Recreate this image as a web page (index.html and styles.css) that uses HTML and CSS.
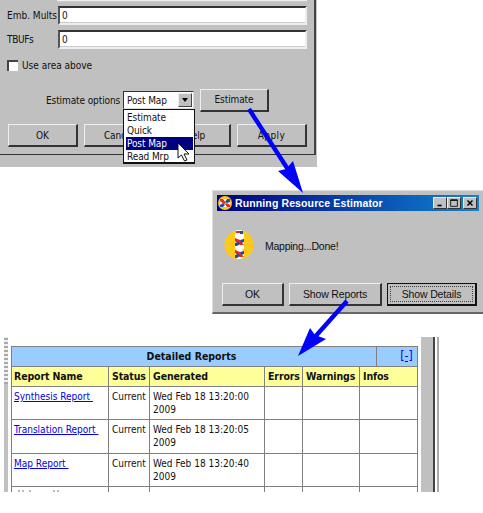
FILE: index.html
```
<!DOCTYPE html>
<html lang="en">
<head>
<meta charset="utf-8">
<title>Resource Estimator</title>
<link rel="stylesheet" href="styles.css">
</head>
<body>
<main class="canvas">
  <section class="panel">
    <div class="panel-body">
      <div class="previous-field"></div>
      <label class="field"><span class="w-mults">Emb. Mults</span><span class="input">0</span></label>
      <label class="field"><span class="w-tbufs">TBUFs</span><span class="input">0</span></label>
      <div class="check"><i class="box"></i><span>Use area above</span></div>
      <div class="options">
        <span class="options-label">Estimate options</span>
        <div class="select">
          <span>Post Map</span><i class="drop"></i>
          <ul class="menu">
            <li>Estimate</li><li>Quick</li><li class="selected">Post Map</li><li>Read Mrp</li>
          </ul>
        </div>
        <div class="button">Estimate</div>
      </div>
      <div class="actions">
        <div class="button">OK</div><div class="button">Cancel</div><div class="button">Help</div><div class="button apply">Apply</div>
      </div>
    </div>
  </section>

  <section class="dialog">
    <header class="titlebar">
      <svg class="app-icon" viewBox="0 0 14 14"><circle cx="7" cy="7" r="7" fill="#ffc91a"/><path d="M2 3h10v8H2z" fill="#fff"/><path d="M2 3h3l3 4-2 1-4-3zM12 11H9L7 8l2-1 3 2z" fill="#e42b20"/><path d="M12 3v3L9 7 7 6l2-3zM2 11V9l3-2 2 2-2 2z" fill="#29489b"/></svg>
      <h1>Running Resource Estimator</h1>
      <div class="window-buttons">
        <i class="win"><svg viewBox="0 0 14 12"><path d="M4 9h5" stroke="#000" stroke-width="2"/></svg></i>
        <i class="win"><svg viewBox="0 0 14 12"><path d="M3 2h8v8H3zM3 3h8" fill="none" stroke="#000"/></svg></i>
        <i class="win close"><svg viewBox="0 0 14 12"><path d="M4 3l6 6M10 3L4 9" stroke="#000" stroke-width="1.7"/></svg></i>
      </div>
    </header>
    <div class="message">
      <svg class="logo" viewBox="0 0 30 30">
        <circle cx="15" cy="16" r="14.500" fill="#ffc91a"/>
        <path d="M12 1h6v3l2 1v4l-2 2 2 3v5l-2 2 2 2v5l-3 2h-4l-2-2v-5l2-2-2-2v-5l2-3-2-2V5l1-1z" fill="#fff"/>
        <path d="M12 2h4v2h-4zM11 9l5 2 4 5h-4l-5-4zM11 21l5 2 4 5h-4l-5-4z" fill="#e42b20"/>
        <path d="M16 2h3v3h-3zM20 10v3l-3 1-1-3zM11 17v-3l3-1 2 2-3 2zM20 22v3l-3 1-1-3zM11 29v-3l3-1 2 2-3 2z" fill="#29489b"/>
      </svg>
      <p>Mapping...Done!</p>
    </div>
    <footer class="dialog-actions"><div class="button">OK</div><div class="button">Show Reports</div><div class="button focused"><span>Show Details</span></div></footer>
  </section>

  <section class="report">
    <div class="left-rail"></div>
    <div class="tables">
      <div class="report-title"><strong>Detailed Reports</strong><a>[-]</a></div>
      <div class="row head"><b>Report Name</b><b>Status</b><b>Generated</b><b>Errors</b><b>Warnings</b><b>Infos</b></div>
      <div class="row"><span><a>Synthesis Report&nbsp;</a></span><span>Current</span><span>Wed Feb 18 13:20:00<br>2009</span><span></span><span></span><span></span></div>
      <div class="row"><span><a>Translation Report&nbsp;</a></span><span>Current</span><span>Wed Feb 18 13:20:05<br>2009</span><span></span><span></span><span></span></div>
      <div class="row"><span><a>Map Report&nbsp;</a></span><span>Current</span><span>Wed Feb 18 13:20:40<br>2009</span><span></span><span></span><span></span></div>
      <div class="row cut"><span><svg width="60" height="3" viewBox="0 0 60 3"><path d="M3 2h2M8 1v2M14 2h2M38 2h2M43 1v2" stroke="#777"/></svg></span><span></span><span></span><span></span><span></span><span></span></div>
    </div>
    <div class="right-rail"></div>
  </section>

  <svg class="arrows" viewBox="0 0 483 513" aria-hidden="true">
    <path d="M249 109L289 171" stroke="#00f" stroke-width="4.4"/>
    <path d="M303 193L278 171L286 169L293 161Z" fill="#00f"/>
    <path d="M347 301L314 338" stroke="#00f" stroke-width="4.4"/>
    <path d="M298 356L310 328L315 335L326 339Z" fill="#00f"/>
    <path d="M178 143v15l3.500-3 3 6 2.500-1-3-6h5z" fill="#fff" stroke="#111"/>
  </svg>
</main>
</body>
</html>
```
FILE: styles.css
```
* { box-sizing: border-box; }
body { margin: 0; background: #fff; color: #111; font: 10px/13px "DejaVu Sans Condensed", "DejaVu Sans", sans-serif; font-stretch: condensed; letter-spacing: -.1px; }
.canvas { position: relative; display: flex; flex-direction: column; width: 483px; height: 513px; overflow: hidden; }
.panel { width: 317px; height: 167px; background: #c0c0c0; flex: none; }
.panel-body { width: 316px; height: 155px; padding-right: 7px; border-right: 2px solid #444; border-bottom: 1px solid #333; }
.previous-field { height: 2px; margin-left: 57px; background: #eee; border-bottom: 1px solid #ccc; }
.field { display: flex; height: 19px; margin: 4px 0 5px 7px; align-items: center; white-space: nowrap; }
.field > span:first-child { width: 51px; flex: none; }
.w-mults { letter-spacing: 0; }
.w-tbufs { letter-spacing: -.35px; }
.input { width: 250px; height: 19px; padding: 2px; background: #fff; border: 2px solid #eee; border-top-color: #333; border-left-color: #555; box-shadow: inset 0 -1px #ccc; line-height: 12px; }
.check { display: flex; align-items: center; gap: 4px; height: 14px; margin: 9px 0 0 7px; letter-spacing: 0; }
.box { width: 11px; height: 11px; background: #fff; border-top: 2px solid #444; border-left: 2px solid #444; }
.options { display: flex; align-items: center; height: 22px; margin-top: 17px; padding-left: 46px; }
.options-label { width: 77px; white-space: nowrap; letter-spacing: -.1px; }
.select { position: relative; display: flex; width: 71px; height: 18px; padding: 2px 1px 1px 3px; background: #fff; border: 1px solid #ddd; border-top-color: #333; border-left-color: #333; justify-content: space-between; white-space: nowrap; }
.drop { display: flex; width: 14px; height: 14px; margin-top: -1px; align-items: center; justify-content: center; background: #c0c0c0; border: 1px solid #eee; border-right-color: #444; border-bottom-color: #444; flex: none; }
.drop::before { content: ""; border: 3.500px solid transparent; border-top: 4px solid #000; border-bottom: 0; }
.menu { position: absolute; top: 17px; left: -1px; width: 72px; height: 55px; margin: 0; padding: 1px 1px 0 2px; background: #fff; border: 1px solid #111; border-bottom-width: 2px; list-style: none; }
.menu li { height: 13px; padding-left: 1px; line-height: 13px; }
.menu .selected { color: #fff; background: #000080; }
.button { display: flex; align-items: center; justify-content: center; height: 23px; border: 1px solid #eee; border-right: 2px solid #333; border-bottom: 2px solid #333; background: #c0c0c0; white-space: nowrap; }
.options .button { width: 69px; margin-left: 6px; }
.actions { display: grid; grid-template-columns: repeat(4, 70px); justify-content: space-between; margin-top: 13px; padding-left: 8px; }
.apply { letter-spacing: .4px; }
.dialog { width: 271px; height: 124px; margin: 23px 0 0 212px; padding: 4px; background: #c0c0c0; border-top: 1px solid #ddd; border-left: 1px solid #ddd; border-bottom: 2px solid #666; flex: none; font-family: "Liberation Sans", sans-serif; font-size: 10.500px; letter-spacing: -.15px; }
.titlebar { display: flex; height: 16px; align-items: center; padding: 0 2px 0 1px; background: linear-gradient(90deg, #000080, #1084d0); color: #fff; }
.app-icon { width: 14px; height: 14px; }
h1 { width: 150px; margin: 0 0 0 3px; font-size: 10.500px; line-height: 14px; letter-spacing: .12px; white-space: nowrap; }
.window-buttons { display: flex; margin-left: auto; }
.win { width: 14px; height: 12px; background: #c0c0c0; border: 1px solid #eee; border-right-color: #333; border-bottom-color: #333; }
.win svg { display: block; width: 12px; height: 10px; }
.close { margin-left: 2px; }
.message { display: flex; height: 72px; align-items: center; padding-left: 7px; }
.logo { width: 30px; height: 30px; margin-top: -6px; }
.message p { margin: 0 0 1px 11px; letter-spacing: -.25px; }
.dialog-actions { display: grid; grid-template-columns: 62px 93px 90px; gap: 5px; padding-left: 5px; }
.focused { border-color: #111; padding: 2px; }
.focused span { display: flex; width: 100%; height: 100%; align-items: center; justify-content: center; border: 1px dotted #444; }
.report { display: flex; width: 440px; height: 155px; margin: 23px 0 0 4px; flex: none; }
.left-rail { width: 4px; background: repeating-linear-gradient(0deg, #aaa 0 2px, #eee 2px 4px) top / 100% 47px no-repeat, #c0c0c0; }
.tables { width: 407px; height: 146px; margin: 9px 0 0 3px; overflow: hidden; border: 1px solid #808080; border-bottom: 0; flex: none; letter-spacing: 0; }
.report-title { display: grid; grid-template-columns: 364px 1fr; height: 20px; background: #99ccff; border-bottom: 1px solid #808080; line-height: 19px; text-align: center; }
.report-title strong { padding-right: 5px; font-size: 10.500px; }
.report-title a { border-left: 1px solid #808080; padding-left: 19px; font-size: 12px; }
.row { display: grid; grid-template-columns: 97px 41px 115px 38px 57px 1fr; height: 33.300px; border-bottom: 1px solid #808080; line-height: 13px; }
.row > * { padding: 3px 3px; border-right: 1px solid #808080; white-space: nowrap; }
.row > :last-child { border-right: 0; }
.row a { margin-left: -1px; }
.head { height: 20px; background: #ffff99; line-height: 12px; }
.head b { font-size: 10.500px; letter-spacing: -.12px; }
.head b:first-child { padding-left: 2px; }
.cut > * { padding-top: 2px; line-height: 0; }
a { color: #0000ee; text-decoration: underline; }
.right-rail { width: 18px; margin-left: 3px; background: linear-gradient(90deg, #c0c0c0 12px, #444 12px 14px, #fff 14px 16px, #aaa 16px 18px); }
.arrows { position: absolute; inset: 0; width: 483px; height: 513px; pointer-events: none; }
```
